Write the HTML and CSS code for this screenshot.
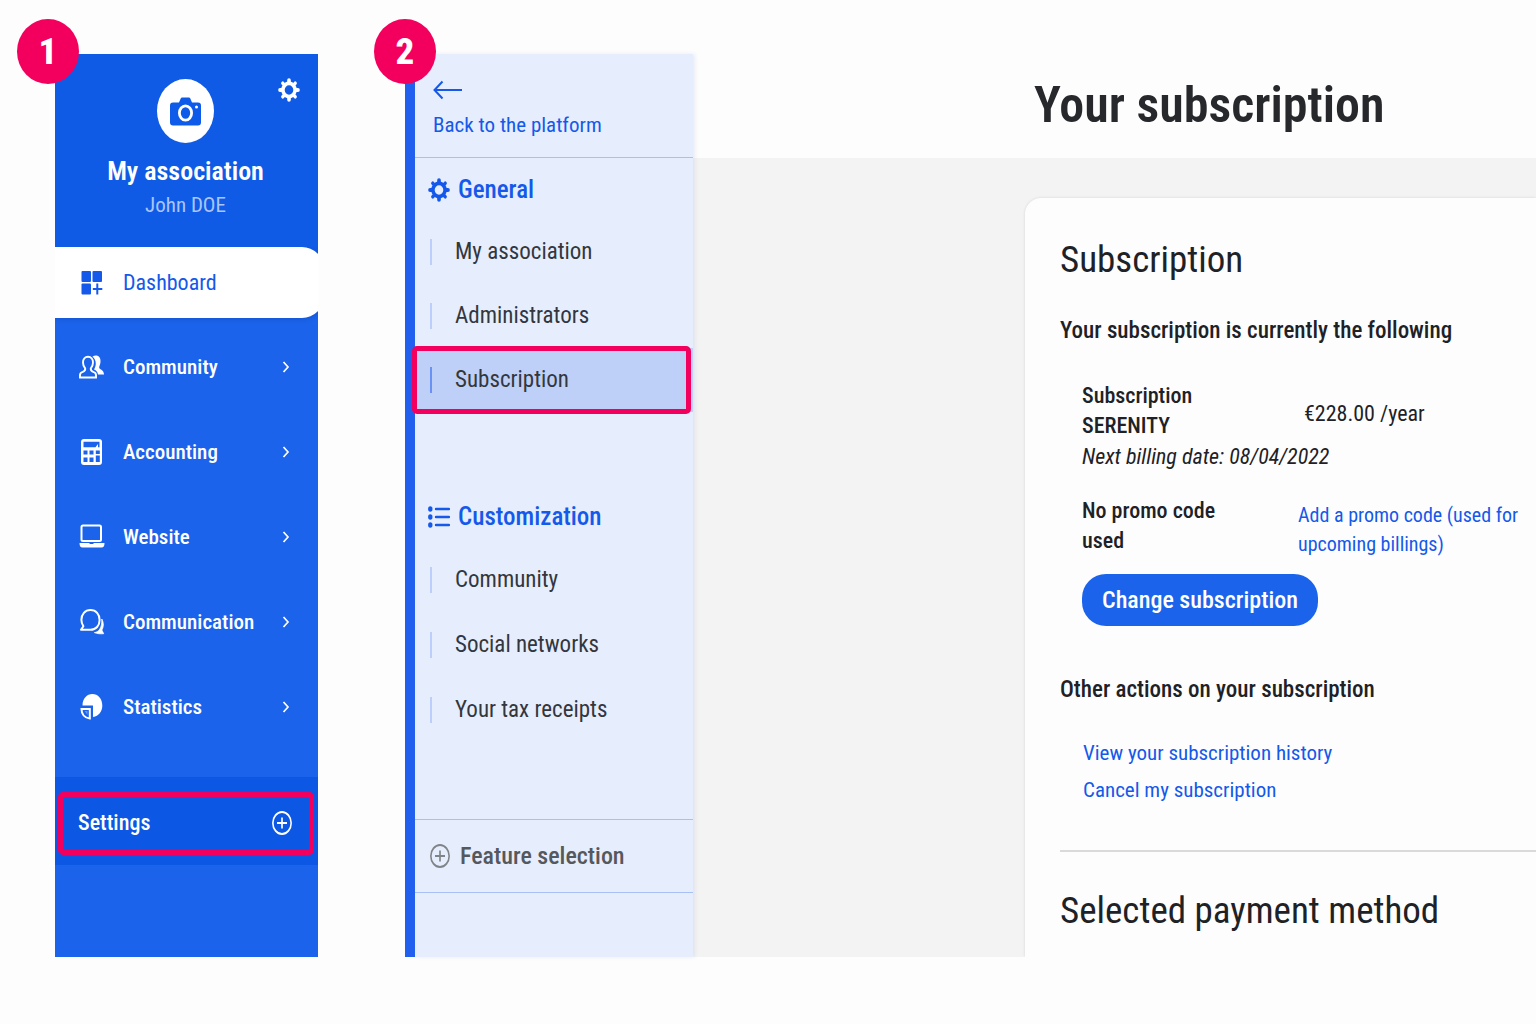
FILE: index.html
```html
<!DOCTYPE html>
<html lang="en">
<head>
<meta charset="utf-8">
<meta name="viewport" content="width=device-width, initial-scale=1">
<title>Your subscription</title>
<link rel="stylesheet" href="styles.css">
</head>
<body>
<svg class="sprite" aria-hidden="true">
  <symbol id="gear" viewBox="0 0 24 24" preserveAspectRatio="none">
    <circle cx="12" cy="12" r="6.6" fill="none" stroke="currentColor" stroke-width="3.8"/>
    <g stroke="currentColor" stroke-width="4" stroke-linecap="round">
      <path d="M12 2.2v2M12 19.8v2M2.2 12h2M19.8 12h2"/>
      <path stroke-width="3.6" d="M5.2 5.2l1 1M17.8 17.8l1 1M5.2 18.8l1-1M17.8 6.2l1-1"/>
    </g>
  </symbol>
  <symbol id="chevron" viewBox="0 0 8 12">
    <path d="M1.5 1l4.500 5-4.500 5" fill="none" stroke="currentColor" stroke-width="1.7"/>
  </symbol>
  <symbol id="plus" viewBox="0 0 24 24" preserveAspectRatio="none">
    <path d="M12 6.500v11M6 12h12" fill="none" stroke="currentColor" stroke-width="2"/>
    <circle cx="12" cy="12" r="11" fill="none" stroke="currentColor" stroke-width="1.9"/>
  </symbol>
</svg>

<main class="page">
  <section class="step" aria-label="Step 1">
    <span class="badge badge-one">1</span>
    <div class="sidebar">
      <header class="profile">
        <button class="gear-button" aria-label="Preferences"><svg class="icon-gear"><use href="#gear"/></svg></button>
        <div class="avatar">
          <svg width="31" height="29" viewBox="0 0 31 29">
            <path d="M3 5.500h6l1.700-4Q11 .5 12.200.5h6.600q1.200 0 1.500 1l1.700 4h6q3 0 3 3V25.500q0 3-3 3H3q-3 0-3-3V8.500q0-3 3-3z" fill="#0f5be9"/>
            <ellipse cx="15.500" cy="16" rx="6.100" ry="7.200" fill="none" stroke="#fff" stroke-width="2.800"/>
            <circle cx="26.500" cy="10" r="1.500" fill="#fff"/>
          </svg>
        </div>
        <h2 class="profile-name">My association</h2>
        <p class="profile-user">John DOE</p>
      </header>
      <nav class="menu" aria-label="Main">
        <a class="menu-item is-current" href="#">
          <svg class="menu-icon" viewBox="0 0 26 26">
            <g fill="currentColor"><rect x="2.500" y="1" width="9.500" height="11" rx="1"/><rect x="13.500" y="1" width="9.500" height="11" rx="1"/><rect x="2.500" y="13.500" width="9.500" height="11" rx="1"/></g>
            <path d="M18.300 13.500v11M13.800 19h9.500" stroke="currentColor" stroke-width="2"/>
          </svg>
          <span class="menu-label">Dashboard</span>
        </a>
        <a class="menu-item" href="#">
          <svg class="menu-icon" viewBox="0 0 26 26">
            <path d="M13.500 2.400C18.500 0 22 3 21.500 8c-.2 2.500-1.300 4-1.300 5.500 0 2 4.300 1.500 4.900 7h-6.100c-.5-2.500-1.500-4-4-5 2.500-4 2.700-9.500-1.500-13.100z" fill="currentColor"/>
            <path d="M9 2.800c-3 0-5 2.300-5 5.700 0 2.500.9 4.500 2.200 5.900.3 2.400-.4 2.900-2.400 3.500C1.800 18.500 1 19.500 1 21v2.500h16V21c0-1.500-.8-2.500-2.800-3.100-2-.6-2.700-1.100-2.400-3.500C13.100 13 14 11 14 8.500c0-3.400-2-5.700-5-5.700z" fill="none" stroke="currentColor" stroke-width="1.900"/>
          </svg>
          <span class="menu-label">Community</span>
          <svg class="chevron"><use href="#chevron"/></svg>
        </a>
        <a class="menu-item" href="#">
          <svg class="menu-icon" viewBox="0 0 26 26">
            <rect x="2" y="0" width="21" height="26" rx="3" fill="currentColor"/>
            <g fill="#1b63ea"><path d="M4.500 2.800h16v5.500h-1.500V5l-2.500 3.300h-12z"/><rect x="4.500" y="11.500" width="4" height="4"/><rect x="10.500" y="11.500" width="4" height="4"/><rect x="16.800" y="11.500" width="4" height="3.500"/><rect x="4.500" y="18.500" width="4" height="4.500"/><rect x="10.500" y="18.500" width="4" height="4.500"/><rect x="16.800" y="16.500" width="4" height="6.500"/></g>
          </svg>
          <span class="menu-label">Accounting</span>
          <svg class="chevron"><use href="#chevron"/></svg>
        </a>
        <a class="menu-item" href="#">
          <svg class="menu-icon" viewBox="0 0 26 26">
            <rect x="2.500" y="1.500" width="19.500" height="15.500" rx="1.500" fill="none" stroke="currentColor" stroke-width="2"/>
            <path d="M.5 19h10v1h4v-1h11q0 4.500-3 4.500h-19q-3 0-3-4.500z" fill="currentColor"/>
          </svg>
          <span class="menu-label">Website</span>
          <svg class="chevron"><use href="#chevron"/></svg>
        </a>
        <a class="menu-item" href="#">
          <svg class="menu-icon" viewBox="0 0 26 26">
            <path d="M11.500 1C6 1 2.400 5.200 2.400 10.800c0 2.600.8 4.700 2 6.500L2 20.800h9.500c5.500 0 9.100-4.200 9.100-9.900C20.600 5.200 17 1 11.500 1z" fill="none" stroke="currentColor" stroke-width="2" stroke-linejoin="round"/>
            <path d="M22.800 10c2.200 4 1.800 8.500 0 11l1.900 3.700c-3.300.3-6.300.1-9.300-1.100 4.200-.3 7.900-4.600 7.400-13.600z" fill="currentColor" stroke="currentColor" stroke-width=".8" stroke-linejoin="round"/>
          </svg>
          <span class="menu-label">Communication</span>
          <svg class="chevron"><use href="#chevron"/></svg>
        </a>
        <a class="menu-item" href="#">
          <svg class="menu-icon" viewBox="0 0 26 26">
            <path d="M3.500 11.500C3.500 4.500 8 0 13.300 0 19 0 23.300 4.500 23.300 11.500c0 6-3.500 10.500-9.300 11.500V11.500z" fill="currentColor"/>
            <path d="M2.500 15h8.300v9.500C5.500 24 2.500 20 2.500 15z" fill="none" stroke="currentColor" stroke-width="2"/>
            <path d="M5.700 17h2.800v4z" fill="currentColor" opacity=".35"/>
          </svg>
          <span class="menu-label">Statistics</span>
          <svg class="chevron"><use href="#chevron"/></svg>
        </a>
      </nav>
      <div class="settings-band">
        <a class="settings" href="#">
          <span>Settings</span>
          <svg class="icon-plus"><use href="#plus"/></svg>
        </a>
      </div>
    </div>
  </section>

  <section class="step step-two" aria-label="Step 2">
    <span class="badge badge-two">2</span>
    <nav class="subnav" aria-label="Settings">
      <a class="back" href="#">
        <svg width="30" height="20" viewBox="0 0 30 20"><path d="M29 10H2M9.500 1.500L1.500 10l8 8.500" fill="none" stroke="currentColor" stroke-width="2"/></svg>
        <span>Back to the platform</span>
      </a>
      <h2 class="group-title"><svg class="icon-gear"><use href="#gear"/></svg>General</h2>
      <ul class="group">
        <li><a href="#">My association</a></li>
        <li><a href="#">Administrators</a></li>
        <li class="selected"><a href="#">Subscription</a></li>
      </ul>
      <h2 class="group-title group-title-next">
        <svg width="22" height="22" viewBox="0 0 22 22"><g stroke="currentColor" stroke-width="2.400" stroke-linecap="round"><path d="M8 3h13M8 11h13M8 19h13"/></g><g fill="currentColor"><ellipse cx="2.300" cy="3" rx="2.200" ry="2.700"/><ellipse cx="2.300" cy="11" rx="2.200" ry="2.700"/><ellipse cx="2.300" cy="19" rx="2.200" ry="2.700"/></g></svg>Customization</h2>
      <ul class="group group-loose">
        <li><a href="#">Community</a></li>
        <li><a href="#">Social networks</a></li>
        <li><a href="#">Your tax receipts</a></li>
      </ul>
      <a class="feature" href="#"><svg class="icon-plus"><use href="#plus"/></svg>Feature selection</a>
    </nav>
    <div class="content">
      <h1 class="title">Your subscription</h1>
      <div class="backdrop">
        <article class="card">
          <h2 class="card-title">Subscription</h2>
          <h3 class="lead">Your subscription is currently the following</h3>
          <div class="details">
            <div class="plan">
              <strong>Subscription SERENITY</strong>
              <span class="price">€228.00 /year</span>
            </div>
            <em>Next billing date: 08/04/2022</em>
            <div class="plan promo">
              <strong>No promo code used</strong>
              <a href="#">Add a promo code (used for upcoming billings)</a>
            </div>
            <button class="change">Change subscription</button>
          </div>
          <h3 class="lead lead-other">Other actions on your subscription</h3>
          <ul class="actions">
            <li><a href="#">View your subscription history</a></li>
            <li><a href="#">Cancel my subscription</a></li>
          </ul>
          <hr class="rule">
          <h2 class="card-title">Selected payment method</h2>
        </article>
      </div>
    </div>
  </section>
</main>
</body>
</html>
```
FILE: styles.css
```css
:root {
  --blue: #1b63ea;
  --deep: #0f5be6;
  --link: #1459ea;
  --pink: #f3005e;
  --pale: #e6edfc;
  --ink: #1e2227;
}

* { box-sizing: border-box; }

body {
  margin: 0;
  background: #fdfdfd;
  color: var(--ink);
  font: 22px/30px "Roboto Condensed", "Liberation Sans Narrow", Roboto, sans-serif;
}

h1, h2, h3, p, ul { margin: 0; padding: 0; }
h1, h2, h3 { font-weight: 500; }
ul { list-style: none; }
a { color: var(--link); text-decoration: none; }
button { font: inherit; border: 0; cursor: pointer; }
svg { display: block; flex: none; }
.sprite { position: absolute; width: 0; height: 0; }

.page {
  display: grid;
  grid-template-columns: 263px minmax(0, 1fr);
  column-gap: 87px;
  min-height: 100vh;
  padding: 54px 0 67px 55px;
}

.step { position: relative; }
.step-two { display: flex; border-left: 10px solid #215fee; }

.badge {
  position: absolute;
  top: -35px;
  z-index: 2;
  display: grid;
  place-items: center;
  width: 62px;
  height: 65px;
  border-radius: 50%;
  background: var(--pink);
  color: #fff;
  font-size: 37px;
  font-weight: 800;
}
.badge-one { left: -38px; }
.badge-two { left: -41px; }

.icon-gear { width: 22px; height: 24px; }
.icon-plus { width: 20px; height: 24px; }

/* Main sidebar */
.sidebar { height: 100%; overflow: hidden; background: var(--blue); color: #fff; }
.profile {
  position: relative;
  display: flex;
  flex-direction: column;
  align-items: center;
  height: 193px;
  padding: 25px 2px 0 0;
  background: var(--deep);
}
.gear-button {
  position: absolute;
  top: 24px;
  right: 18px;
  padding: 0;
  background: none;
  color: #fff;
}
.avatar {
  display: grid;
  place-items: center;
  width: 57px;
  height: 64px;
  border-radius: 50%;
  background: #fff;
}
.profile-name { margin-top: 11px; font-size: 26px; font-weight: 600; line-height: 34px; }
.profile-user { color: #a9c5fb; font-size: 21px; line-height: 34px; }

.menu { background: linear-gradient(var(--deep) 35px, transparent 35px); }
.menu-item {
  display: flex;
  align-items: center;
  gap: 18px;
  height: 85px;
  padding: 0 28px 0 24px;
  color: #fff;
  font-size: 21px;
  font-weight: 500;
}
.menu-item.is-current {
  height: 71px;
  margin: 0 -6px 6px 0;
  border-radius: 0 22px 22px 0;
  background: #fff;
  color: var(--link);
  font-size: 22px;
  font-weight: 400;
  box-shadow: 0 1px 4px #0b47b880;
}
.menu-icon { width: 26px; height: 26px; }
.menu-label { flex: 1; }
.chevron { width: 8px; height: 12px; }

.settings-band {
  margin-top: 28px;
  padding: 15px 4px 10px 3px;
  background: #0c57e4;
}
.settings {
  display: flex;
  align-items: center;
  justify-content: space-between;
  height: 63px;
  padding: 0 17px 2px 15px;
  border: 5px solid var(--pink);
  border-radius: 5px;
  color: #fff;
  font-weight: 500;
}

/* Settings sub-navigation */
.subnav {
  position: relative;
  flex: none;
  width: 278px;
  background: var(--pale);
  box-shadow: 2px 0 4px #8fa6d433;
}
.back {
  display: block;
  height: 104px;
  padding: 26px 18px 0;
  border-bottom: 1px solid #a8c0f5;
  font-size: 21px;
}
.back span { display: block; margin-top: 10px; }
.group-title {
  display: flex;
  align-items: center;
  gap: 8px;
  height: 62px;
  padding: 1px 0 0 13px;
  color: var(--link);
  font-size: 25px;
}
.group-title-next { margin-top: 73px; }
.group li { position: relative; display: flex; align-items: center; height: 64px; padding-left: 15px; }
.group-loose li { height: 65px; }
.group a {
  padding-left: 23px;
  border-left: 2px solid #bccffa;
  color: #33373c;
  font-size: 23px;
  line-height: 26px;
}
.group .selected { background: #becff8; }
.group .selected a { border-color: #6a92f4; }
.group .selected::after {
  content: "";
  position: absolute;
  inset: -2px 2px -2px -3px;
  border: 5px solid var(--pink);
  border-radius: 5px;
}
.feature {
  display: flex;
  align-items: center;
  gap: 10px;
  height: 74px;
  margin-top: 77px;
  padding-left: 15px;
  border: solid #a8c0f5;
  border-width: 1px 0;
  color: #55585c;
  font-size: 24px;
  font-weight: 500;
}
.feature svg { color: #808388; }

/* Subscription page */
.content { display: flex; flex: 1; flex-direction: column; min-width: 0; }
.title { height: 104px; padding-left: 341px; font-size: 50px; font-weight: 600; line-height: 102px; color: #26282b; }
.backdrop { flex: 1; display: flex; padding: 40px 0 0 332px; background: #f3f3f3; }
.card {
  flex: 1;
  padding: 32px 0 16px 35px;
  border-radius: 16px 0 0;
  background: #fdfdfd;
  box-shadow: 0 0 3px #0000001f;
  clip-path: inset(-4px 0 0 -4px);
}
.card-title { font-size: 37px; font-weight: 400; line-height: 60px; }
.lead { margin-top: 26px; font-size: 23px; }
.details { padding: 35px 0 0 22px; }
.plan { display: grid; grid-template-columns: 160px 1fr; column-gap: 56px; align-items: start; }
.plan strong { font-weight: 500; }
.price { padding: 18px 0 0 6px; }
.details em { display: block; line-height: 32px; }
.promo { margin: 23px 0 15px; }
.promo a { padding-top: 5px; font-size: 20px; line-height: 29px; }
.change {
  height: 52px;
  padding: 0 20px;
  border-radius: 24px;
  background: var(--blue);
  color: #fff;
  font-size: 24px;
  font-weight: 500;
}
.lead-other { margin-top: 49px; }
.actions { padding: 30px 0 0 23px; font-size: 21px; line-height: 37px; }
.rule { height: 2px; margin: 41px 0 29px; border: 0; background: #d9dadc; }
```
